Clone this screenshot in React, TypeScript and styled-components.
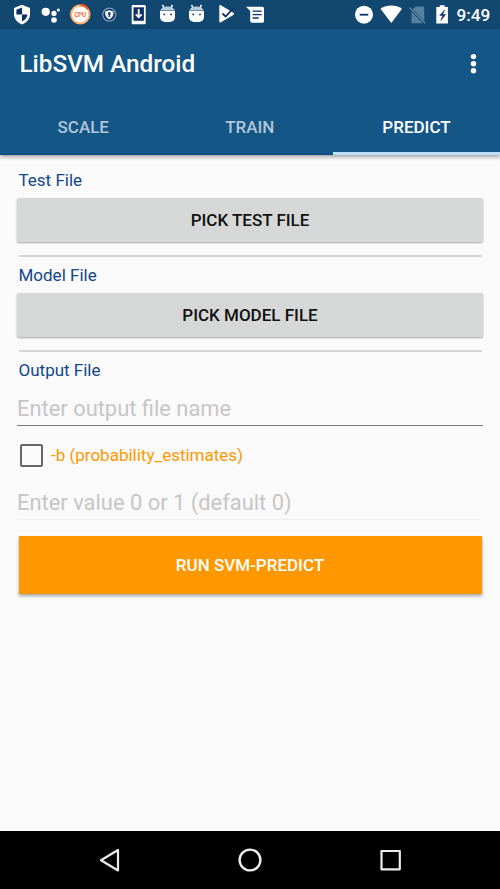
import React from "react";
import styled, { createGlobalStyle } from "styled-components";

const GlobalStyle = createGlobalStyle`
  * { box-sizing: border-box; }
  body { margin: 0; background: #fafafa; }
  button, input { font-family: inherit; }
`;

const Screen = styled.div`
  display: flex;
  flex-direction: column;
  height: 889px;
  width: 500px;
  overflow: hidden;
  background: #fafafa;
  font-family: Roboto, "Liberation Sans", sans-serif;
`;

const StatusBar = styled.div`
  display: flex;
  flex: none;
  justify-content: space-between;
  height: 29px;
  padding: 0 9px 0 7px;
  background: #12476f;
  color: #fff;
`;

const StatusGroup = styled.div`
  display: flex;
`;

const StatusIcon = styled.svg`
  display: block;
  flex: none;
  height: 29px;
`;

const Clock = styled.span`
  width: 37px;
  padding-left: 2.5px;
  white-space: nowrap;
  font-size: 17.2px;
  font-weight: 500;
  line-height: 31px;
`;

const Header = styled.header`
  position: relative;
  flex: none;
  height: 126px;
  background: #145686;
  box-shadow: 0 2px 4px rgba(0, 0, 0, 0.36);
`;

const Toolbar = styled.div`
  display: flex;
  align-items: center;
  justify-content: space-between;
  height: 69px;
  padding: 0 23px 0 19.5px;
`;

const Title = styled.h1`
  margin: 0;
  color: #fff;
  font-size: 24.3px;
  font-weight: 500;
  line-height: 30px;
`;

const MenuButton = styled.button`
  display: flex;
  padding: 0;
  border: 0;
  background: none;
`;

const Tabs = styled.nav`
  display: grid;
  grid-template-columns: 333px 167px;
  height: 57px;
`;

const TabPair = styled.div`
  display: grid;
  grid-template-columns: 1fr 1fr;
  border-bottom: 1px solid #0d4683;
`;

const Tab = styled.button<{ $active?: boolean }>`
  padding: ${(p) => (p.$active ? "4px 0 0" : "2px 0 0")};
  border: 0;
  border-bottom: ${(p) => (p.$active ? "3px solid #bbdefb" : "0")};
  background: none;
  color: ${(p) => (p.$active ? "#fff" : "#b0c6d7")};
  font-size: 17px;
  font-weight: 500;
`;

const Form = styled.main`
  display: flex;
  flex: 1;
  flex-direction: column;
  padding: 14px 17px 0;
`;

const Label = styled.label`
  height: 23px;
  margin: 0 1.5px;
  color: #12478a;
  font-size: 17px;
  line-height: 23px;
`;

const PickButton = styled.button`
  height: 44px;
  margin: 6px 0 13px;
  padding: 0;
  border: 0;
  border-radius: 2px;
  background: #d6d8d7;
  box-shadow: 0 1px 2px rgba(0, 0, 0, 0.34);
  color: #111;
  font-size: 17px;
  font-weight: 500;
`;

const Divider = styled.hr`
  width: 463px;
  height: 2px;
  margin: 0 0 7px 1.5px;
  border: 0;
  background: #d4d5d5;
`;

const TextField = styled.input<{ $faint?: boolean }>`
  height: ${(p) => (p.$faint ? "38px" : "40px")};
  margin: ${(p) => (p.$faint ? "15px 0 0" : "4px 0 0")};
  padding: ${(p) => (p.$faint ? "4px 0 0" : "6px 0 0")};
  border: 0;
  border-bottom: ${(p) => (p.$faint ? "1px solid #efefef" : "1px solid #7b7b7b")};
  background: none;
  font-size: 21.9px;
  &::placeholder { color: #c6c6c6; opacity: 1; }
`;

const CheckRow = styled.div`
  display: flex;
  align-items: center;
  gap: 8px;
  height: 24px;
  margin: 17px 0 0 3px;
`;

const CheckBox = styled.span`
  width: 23px;
  height: 23px;
  border: 2px solid #666;
  border-radius: 2px;
`;

const CheckLabel = styled.span`
  color: #ff9800;
  font-size: 17px;
  line-height: 24px;
`;

const RunButton = styled.button`
  width: 463px;
  height: 58px;
  margin: 16px 0 0 1.5px;
  padding: 0;
  border: 0;
  background: #ff9800;
  box-shadow: 0 2px 3px rgba(0, 0, 0, 0.34);
  color: #fff;
  font-size: 17px;
  font-weight: 500;
`;

const NavBar = styled.footer`
  display: flex;
  flex: none;
  align-items: center;
  justify-content: space-between;
  height: 58px;
  padding: 0 97px;
  background: #000;
`;

const BG = "#12476f";
const DARK = "#0d2f68";

function Droid() {
  return (
    <StatusIcon width="29" viewBox="0 0 29 29">
      <path d="M10.500 4.800l1.500 3M20.500 4.800l-1.500 3" stroke="#fff" strokeWidth="1.500" />
      <path d="M8.500 10.300c1-5.200 13-5.200 14 0z" fill="#b9cad8" />
      <path d="M8 10.800h15v6.200a5 5 0 0 1-5 5h-5a5 5 0 0 1-5-5z" fill="#fff" />
      <circle cx="12.200" cy="14.400" r=".9" fill={DARK} />
      <circle cx="19" cy="14.400" r=".9" fill={DARK} />
    </StatusIcon>
  );
}

function Notifications() {
  return (
    <StatusGroup>
      <StatusIcon width="29" viewBox="0 0 29 29">
        <path d="M15 4.800l8 3.100v6c0 5-3.400 8.800-8 10.500-4.600-1.700-8-5.500-8-10.500v-6z" fill="#fff" />
        <path d="M15 7.600v6.800H9.400V9.700zM15 14.400h5.500c-.5 3.200-2.700 5.700-5.500 7z" fill={DARK} />
      </StatusIcon>
      <StatusIcon width="29" viewBox="0 0 29 29" fill="#fff">
        <circle cx="9.700" cy="11.800" r="4.100" />
        <circle cx="18" cy="13.400" r="2.600" />
        <circle cx="22.300" cy="9.900" r="1.500" />
        <circle cx="18" cy="20" r="2.800" />
      </StatusIcon>
      <StatusIcon width="29" viewBox="0 0 29 29">
        <circle cx="15.300" cy="14.400" r="9.200" fill="#fff" stroke="#ffad66" strokeWidth="2" />
        <path d="M15.300 5.200a9.200 9.200 0 0 1 7.500 3.900" fill="none" stroke="#ff5a1c" strokeWidth="2.200" />
        <text x="15.300" y="17.200" textAnchor="middle" fill="#ff6a30" fontSize="7" fontWeight="500" fontFamily="Roboto, sans-serif" textLength="12">CPU</text>
      </StatusIcon>
      <StatusIcon width="29" viewBox="0 0 29 29">
        <circle cx="15.300" cy="14.600" r="6.500" fill="#16386c" stroke="#7899af" strokeWidth="1.300" />
        <path d="M15.300 10.200l4.200 1.300c.2 4-1.200 6.300-4.200 7.800-3-1.500-4.400-3.800-4.200-7.800z" fill="#fff" />
        <path d="M15.300 12a1.600 1.600 0 0 1 .8 3l.3 2h-2.200l.3-2a1.600 1.600 0 0 1 .8-3z" fill="#28537d" />
      </StatusIcon>
      <StatusIcon width="29" viewBox="0 0 29 29">
        <rect x="8.700" y="5" width="14" height="19.200" rx="1" fill="#fff" />
        <rect x="10.500" y="7.300" width="10.400" height="13.500" fill={DARK} />
        <path d="M15.700 9v7M12.800 14.300l2.900 3 2.900-3" fill="none" stroke="#fff" strokeWidth="1.800" />
      </StatusIcon>
      <Droid />
      <Droid />
      <StatusIcon width="29" viewBox="0 0 29 29">
        <path d="M9.300 6.200q0-1.800 1.600-1l12.400 7.500q1.700 1.100 0 2.200l-12.400 7.400q-1.600.8-1.600-1z" fill="#fff" />
        <path d="M12.500 13.500l3.100 3 8-8.500" fill="none" stroke={DARK} strokeWidth="1.800" />
      </StatusIcon>
      <StatusIcon width="29" viewBox="0 0 29 29">
        <path d="M7 6.700h16.300q1.700 0 1.700 1.500v13q0 1.500-1.600 1.500H13q-1.800 0-1.800-1.600V11z" fill="#fff" />
        <path d="M13.700 11.200h9M13.700 14.600h9M13.700 18h6" stroke={DARK} strokeWidth="1.300" />
      </StatusIcon>
    </StatusGroup>
  );
}

function SystemStatus() {
  return (
    <StatusGroup>
      <StatusIcon width="28" viewBox="0 0 28 29">
        <circle cx="14" cy="14.700" r="9" fill="#fff" />
        <path d="M9.700 14.700h8.600" stroke={DARK} strokeWidth="1.800" />
      </StatusIcon>
      <StatusIcon width="28" viewBox="0 0 28 29">
        <path d="M2.500 8.800C8.700 4.400 17.800 4.400 24 8.800L13.300 23z" fill="#fff" />
      </StatusIcon>
      <StatusIcon width="24" viewBox="0 0 24 29">
        <path d="M9.500 6.500H17q1.200 0 1.200 1.200v15.600H5.500V10.500z" fill="#57809c" />
        <path d="M3.700 7.600L19.200 24" stroke={BG} strokeWidth="2.800" />
        <path d="M3.700 7.600L19.200 23.400" stroke="#7394aa" strokeWidth="1.200" />
      </StatusIcon>
      <StatusIcon width="24" viewBox="0 0 24 29">
        <path d="M9.700 5.200h5v1.700h3.200v16.500H6.300V6.900h3.400z" fill="#fff" />
        <path d="M14.500 10l-4.800 5.500h3l-2 5 5-6h-3z" fill={DARK} stroke={DARK} strokeWidth=".5" />
      </StatusIcon>
      <Clock>9:49</Clock>
    </StatusGroup>
  );
}

export default function App() {
  return (
    <>
      <GlobalStyle />
      <Screen>
        <StatusBar>
          <Notifications />
          <SystemStatus />
        </StatusBar>
        <Header>
          <Toolbar>
            <Title>LibSVM Android</Title>
            <MenuButton aria-label="More options">
              <svg width="7" height="22" viewBox="0 0 7 22" fill="#fff">
                <circle cx="3.500" cy="3.600" r="2.700" />
                <circle cx="3.500" cy="10.700" r="2.700" />
                <circle cx="3.500" cy="17.800" r="2.700" />
              </svg>
            </MenuButton>
          </Toolbar>
          <Tabs>
            <TabPair>
              <Tab>SCALE</Tab>
              <Tab>TRAIN</Tab>
            </TabPair>
            <Tab $active>PREDICT</Tab>
          </Tabs>
        </Header>
        <Form>
          <Label>Test File</Label>
          <PickButton>PICK TEST FILE</PickButton>
          <Divider />
          <Label>Model File</Label>
          <PickButton>PICK MODEL FILE</PickButton>
          <Divider />
          <Label>Output File</Label>
          <TextField placeholder="Enter output file name" />
          <CheckRow>
            <CheckBox />
            <CheckLabel>-b (probability_estimates)</CheckLabel>
          </CheckRow>
          <TextField $faint disabled placeholder="Enter value 0 or 1 (default 0)" />
          <RunButton>RUN SVM-PREDICT</RunButton>
        </Form>
        <NavBar>
          <svg width="26" height="28" viewBox="0 0 26 28" fill="none" stroke="#ececec" strokeWidth="2.200" strokeLinejoin="round">
            <path d="M21 4v20.500L4 14.300z" />
          </svg>
          <svg width="26" height="28" viewBox="0 0 26 28" fill="none" stroke="#ececec" strokeWidth="2.400">
            <circle cx="13" cy="14" r="10.400" />
          </svg>
          <svg width="26" height="28" viewBox="0 0 26 28" fill="none" stroke="#ececec" strokeWidth="2.200" strokeLinejoin="round">
            <rect x="4.500" y="5" width="18.300" height="18.300" />
          </svg>
        </NavBar>
      </Screen>
    </>
  );
}
